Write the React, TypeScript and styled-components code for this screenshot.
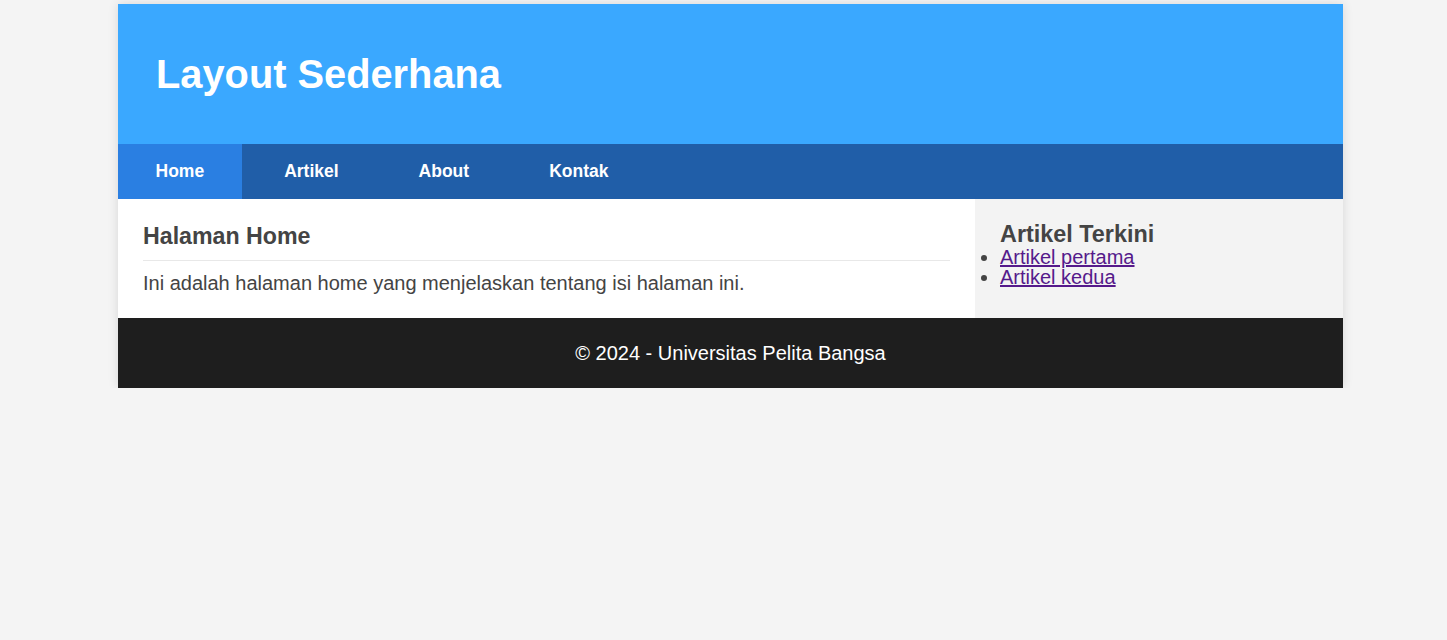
import React from "react";
import styled, { createGlobalStyle } from "styled-components";

const Global = createGlobalStyle`
  html, body { margin: 0; padding: 0; }
  body {
    background: #f4f4f4;
    font-family: "Liberation Sans", Arial, sans-serif;
    color: #444;
  }
`;

const Page = styled.div`
  padding-top: 4px;
  padding-left: 118px;
`;

const Container = styled.div`
  width: 1225px;
  background: #fff;
  box-shadow: 0 0 10px rgba(0, 0, 0, 0.12);
`;

const Header = styled.header`
  background: #3aa8ff;
  height: 140px;
  display: flex;
  align-items: center;
  padding: 0 38px;
  box-sizing: border-box;
`;

const Title = styled.h1`
  margin: 0;
  color: #fff;
  font-size: 39.8px;
  font-weight: bold;
`;

const Nav = styled.nav`
  background: #205ea8;
  height: 55px;
  display: flex;
  gap: 5px;
`;

const NavLink = styled.a<{ $active?: boolean }>`
  display: flex;
  align-items: center;
  padding: 0 37.5px;
  color: #fff;
  font-weight: bold;
  font-size: 17.5px;
  text-decoration: none;
  background: ${(p) => (p.$active ? "#2a7fe2" : "transparent")};
`;

const Main = styled.div`
  display: grid;
  grid-template-columns: 857px 368px;
  height: 119px;
`;

const Content = styled.section`
  padding: 24px 25px 0;
`;

const PageTitle = styled.h2`
  margin: 0;
  font-size: 23.2px;
  line-height: 27px;
  font-weight: bold;
  color: #444;
  padding-bottom: 10px;
  border-bottom: 1px solid #e8e8e8;
`;

const Paragraph = styled.p`
  margin: 11px 0 0;
  font-size: 20px;
  line-height: 23px;
  color: #444;
`;

const Sidebar = styled.aside`
  background: #f3f3f3;
  padding: 23px 25px 0;
`;

const SideTitle = styled.h3`
  margin: 0;
  font-size: 23.4px;
  line-height: 25px;
  font-weight: bold;
  color: #444;
`;

const List = styled.ul`
  margin: 0;
  padding: 0;
`;

const Item = styled.li`
  font-size: 20px;
  line-height: 20px;
`;

const Link = styled.a`
  color: #551a8b;
`;

const Footer = styled.footer`
  background: #1e1e1e;
  color: #fff;
  height: 70px;
  display: flex;
  align-items: center;
  justify-content: center;
  font-size: 20px;
`;

export default function App() {
  return (
    <>
      <Global />
      <Page>
        <Container>
          <Header>
            <Title>Layout Sederhana</Title>
          </Header>
          <Nav>
            <NavLink href="#" $active>Home</NavLink>
            <NavLink href="#">Artikel</NavLink>
            <NavLink href="#">About</NavLink>
            <NavLink href="#">Kontak</NavLink>
          </Nav>
          <Main>
            <Content>
              <PageTitle>Halaman Home</PageTitle>
              <Paragraph>Ini adalah halaman home yang menjelaskan tentang isi halaman ini.</Paragraph>
            </Content>
            <Sidebar>
              <SideTitle>Artikel Terkini</SideTitle>
              <List>
                <Item><Link href="#">Artikel pertama</Link></Item>
                <Item><Link href="#">Artikel kedua</Link></Item>
              </List>
            </Sidebar>
          </Main>
          <Footer>© 2024 - Universitas Pelita Bangsa</Footer>
        </Container>
      </Page>
    </>
  );
}
